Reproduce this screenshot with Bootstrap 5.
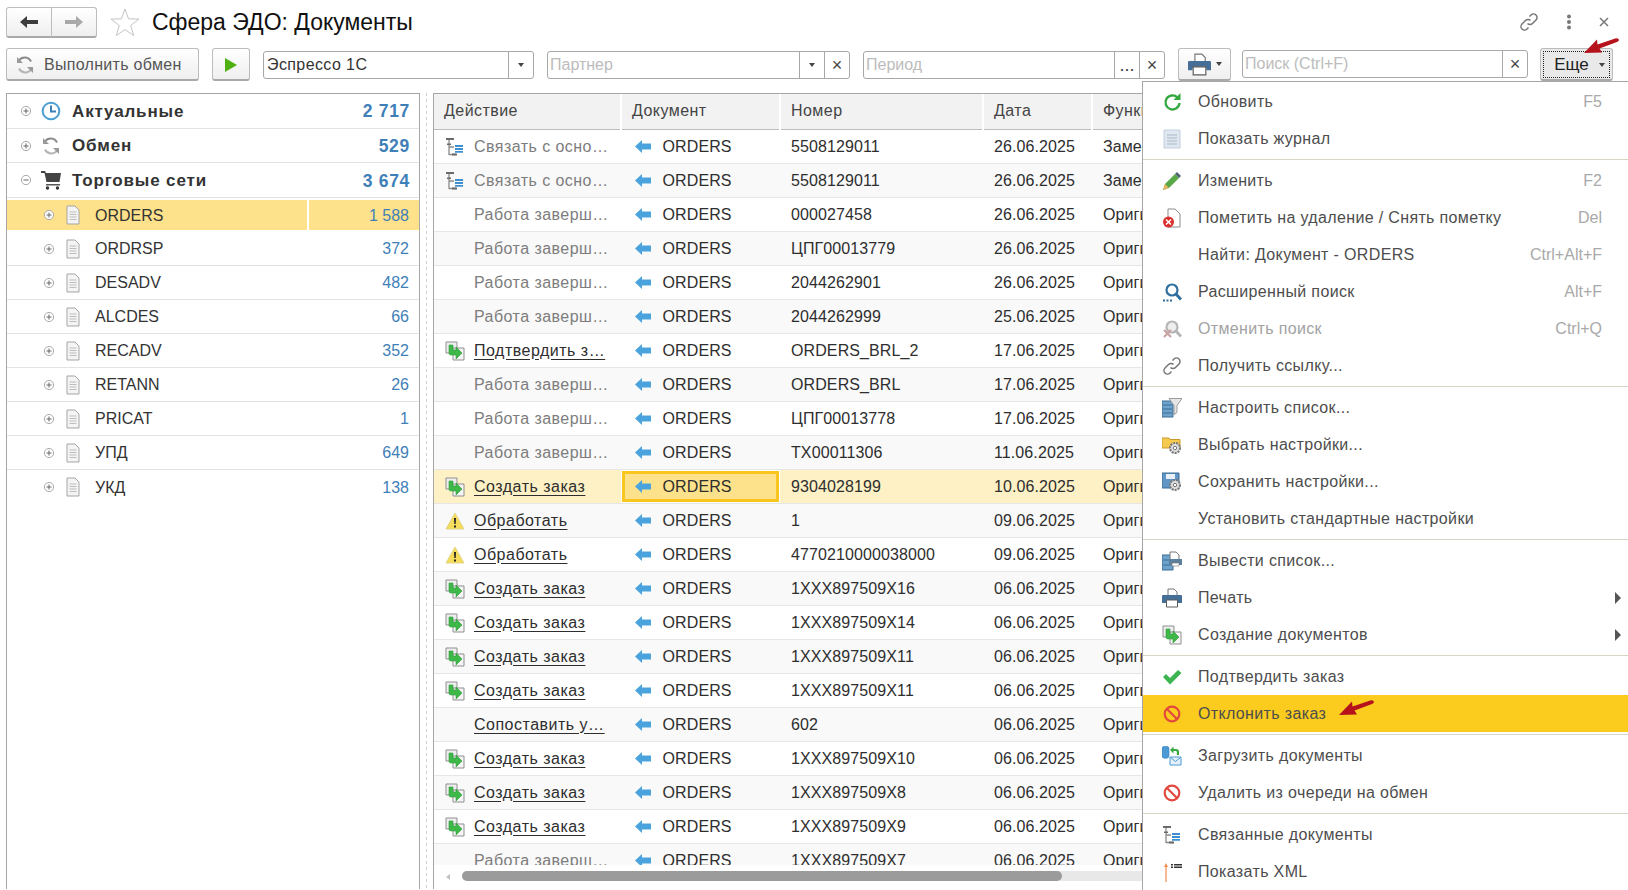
<!DOCTYPE html>
<html lang="ru">

<head>
    <meta charset="UTF-8">
    <title>Сфера ЭДО: Документы</title>
    <link href="https://cdn.jsdelivr.net/npm/bootstrap@5.3.0/dist/css/bootstrap.min.css" rel="stylesheet">
    <style>
        html, body {
            height: 890px;
            overflow: hidden;
        }

        body {
            background: #fff;
            font-family: "Liberation Sans", Arial, sans-serif;
            font-size: 16px;
            color: #2e2e2e;
        }

        .page-top {
            position: relative;
            padding: 7px 0 0 6px;
        }

        .title-row {
            height: 30px;
        }

        .page-title {
            font-size: 23px;
            font-weight: 400;
            color: #111;
            margin: 0 0 0 12px;
            line-height: 30px;
        }

        .star-icon {
            margin-left: 13px;
        }

        .top-icons {
            width: 91px;
            margin-right: 18px;
        }

        .nav-btn, .tool-btn {
            --bs-btn-padding-y: 0;
            --bs-btn-padding-x: 0;
            --bs-btn-font-size: 16px;
            --bs-btn-border-radius: 3px;
            background: linear-gradient(#fff, #efefef);
            border: 1px solid #bdbdbd;
            border-bottom: 2px solid #a9a9a9;
            color: #555;
        }

        .nav-btn {
            width: 46px;
            height: 31px;
        }

        .tools-row {
            height: 33px;
            margin-top: 11px;
            gap: 13px;
        }

        .tool-btn {
            height: 33px;
        }

        .exchange-btn {
            width: 193px;
            gap: 9px;
            padding-left: 8px;
            padding-top: 1px;
            letter-spacing: .3px;
            justify-content: flex-start;
        }

        .run-btn {
            width: 38px;
        }

        .print-btn {
            width: 53px;
            gap: 5px;
        }

        .more-btn {
            width: 73px;
            margin-left: -1px;
            padding-left: 6px;
            padding-top: 1px;
            background: #e9e9e9;
            color: #222;
            font-size: 17px;
            gap: 10px;
            outline: 1px dotted #222;
            outline-offset: -4px;
        }

        .caret-down {
            width: 0;
            height: 0;
            border: 3px solid transparent;
            border-top: 4px solid #444;
            border-bottom: 0;
        }

        .field {
            height: 28px;
            flex-wrap: nowrap;
        }

        .field .form-control {
            font-size: 16px;
            padding: 0 2px;
            border: 1px solid #a8a8a8;
            border-radius: 3px 0 0 3px;
            color: #333;
            box-shadow: none;
        }

        .field .form-control::placeholder {
            color: #bcbcbc;
        }

        .field .btn {
            width: 26px;
            padding: 0;
            font-size: 18px;
            line-height: 24px;
            border: 1px solid #a8a8a8;
            border-radius: 0;
            color: #444;
            background: #fff;
        }

        .field .btn:last-child {
            border-radius: 0 3px 3px 0;
        }

        .combo-field {
            width: 271px;
        }

        .combo-field .form-control {
            padding-left: 3px;
            letter-spacing: .4px;
        }

        .partner-field {
            width: 303px;
        }

        .period-field {
            width: 302px;
        }

        .search-field {
            width: 286px;
            margin-left: -2px;
            margin-top: -1px;
        }

        .work-area {
            height: 796px;
            margin-top: 12px;
            padding-left: 6px;
        }

        .tree-box {
            width: 414px;
            flex: none;
            border: 1px solid #a6a6a6;
            border-bottom: 0;
        }

        .tree-row {
            height: 34px;
            padding: 0;
            border-radius: 0 !important;
            border-color: #e3e3e3;
            color: #333;
            display: flex;
            align-items: center;
        }

        .tree-row.tree-top {
            height: 34.7px;
            font-weight: 700;
            font-size: 17px;
            letter-spacing: .85px;
        }

        .tree-row.tree-top .tree-count {
            letter-spacing: .7px;
            font-size: 17.5px;
            padding-right: 9px;
        }

        .tree-row.tree-sel {
            background: #fde28b;
            background-clip: padding-box;
            border-top: 2px solid #fff;
            border-bottom: 2px solid #fff;
        }

        .tree-row.tree-sel .tree-count {
            height: 100%;
            line-height: 30px;
            border-left: 2px solid #fff;
        }

        .tree-name {
            flex: 1;
            padding-top: 1px;
        }

        .tree-count {
            width: 112px;
            padding-right: 10px;
            padding-top: 1px;
            text-align: right;
            color: #3f7fb8;
        }

        .tree-top svg.tree-toggle {
            margin: 0 9px 0 13px;
        }

        .tree-top svg.tree-icon {
            margin-right: 11px;
        }

        .tree-child svg.tree-toggle {
            margin: 0 8px 0 36px;
        }

        .tree-child svg.tree-icon {
            margin-right: 12px;
        }

        .split-line {
            width: 13px;
            flex: none;
            background: linear-gradient(#d0d0d0 50%, transparent 50%) 6px 0 / 1px 6px repeat-y;
        }

        .docs-box {
            flex: 1;
            min-width: 0;
            position: relative;
            border: 1px solid #a6a6a6;
            border-bottom: 0;
            overflow: hidden;
        }

        .docs-scroll {
            height: 771px;
            overflow: hidden;
        }

        .docs-table {
            table-layout: fixed;
            width: 900px;
            margin: 0;
            color: #2e2e2e;
            font-size: 16px;
        }

        .docs-table th, .docs-table td {
            height: 34px;
            padding: 1px 0 0 11px;
            vertical-align: middle;
            white-space: nowrap;
            overflow: hidden;
            font-weight: 400;
            letter-spacing: .1px;
            border-bottom: 1px solid #e6e6e6;
            box-shadow: none;
            background: none;
            color: inherit;
        }

        .docs-table th {
            height: 35px;
            padding: 0 0 0 10px;
            letter-spacing: .45px;
            background: #f2f2f2;
            color: #444;
            border-bottom: 1px solid #bdbdbd;
            border-right: 2px solid #fff;
        }

        .docs-table tbody tr:nth-child(even) td {
            background: #f9f9f9;
        }

        .docs-table tbody tr.row-sel td {
            background: #fdf1c5;
        }

        .docs-table tbody tr.row-sel td.cell-sel {
            background: #fde28b;
            box-shadow: inset 0 0 0 1px #fff, inset 0 0 0 4px #f8c61e;
        }

        .action-cell {
            display: flex;
            align-items: center;
            height: 32px;
        }

        .action-icon {
            width: 22px;
            margin-left: -1px;
            margin-right: 8px;
            flex: none;
            display: flex;
            justify-content: center;
        }

        .action-done {
            color: #7d7d7d;
            letter-spacing: .45px;
        }

        .action-link {
            color: #2e2e2e;
            letter-spacing: .5px;
            text-decoration: underline;
            text-underline-offset: 3px;
        }

        .doc-arrow {
            margin: 0 7px 0 3px;
            vertical-align: -1px;
        }

        .h-scroll {
            height: 10px;
            margin: 6px 0 0 28px;
            background: #e8e8e8;
            border-radius: 5px;
            position: relative;
        }

        .h-scroll::before {
            content: "";
            display: block;
            width: 600px;
            height: 10px;
            background: #9b9b9b;
            border-radius: 5px;
        }

        .scroll-left {
            position: absolute;
            left: 12px;
            top: 780px;
            border: 3px solid transparent;
            border-right: 4px solid #c2c2c2;
            border-left: 0;
        }

        .more-menu {
            --bs-dropdown-padding-y: 1px;
            --bs-dropdown-padding-x: 0;
            --bs-dropdown-border-radius: 0;
            --bs-dropdown-border-color: #a6a6a6;
            --bs-dropdown-font-size: 16px;
            --bs-dropdown-link-color: #4d4d4d;
            position: absolute;
            display: block;
            left: 1142px;
            top: 81px;
            width: 490px;
            height: 815px;
            overflow: hidden;
            border-width: 1px 0 0 1px;
        }

        .more-menu .dropdown-item {
            height: 37px;
            padding: 0 30px 0 0;
            letter-spacing: .35px;
            display: flex;
            align-items: center;
        }

        .more-menu .dropdown-item.disabled {
            color: #a2a2a2;
        }

        .more-menu .dropdown-item.item-hot {
            background: #fbcb1e;
        }

        .more-menu .dropdown-divider {
            margin: 2px 0;
            border-color: #d9d5c5;
            opacity: 1;
        }

        .menu-icon {
            width: 55px;
            flex: none;
            padding-left: 19px;
            display: flex;
        }

        .menu-key {
            margin-left: auto;
            letter-spacing: 0;
            color: #a9a9a9;
        }

        .caret-right {
            margin-left: auto;
            margin-right: -19px;
            width: 0;
            height: 0;
            border: 6px solid transparent;
            border-left: 6px solid #555;
            border-right: 0;
        }

        .red-arrow {
            position: absolute;
            z-index: 1001;
        }

        .arrow-more {
            left: 1584px;
            top: 38px;
        }

        .arrow-reject {
            left: 1339px;
            top: 700px;
        }
    </style>
</head>

<body>
    <svg width="0" height="0" class="position-absolute">
        <symbol id="i-sync" viewBox="0 0 20 20">
            <path d="M16 6.500A7 7 0 0 0 4 5.500" fill="none" stroke="#8a8a8a" stroke-width="2" />
            <path d="M4 13.500a7 7 0 0 0 12 1" fill="none" stroke="#b5b5b5" stroke-width="2" />
            <path d="M2 2v6h6zM18 18v-6h-6z" fill="#9a9a9a" />
        </symbol>
        <symbol id="i-clock" viewBox="0 0 20 20">
            <circle cx="10" cy="10" r="8.300" fill="#fff" stroke="#4b9fd5" stroke-width="2" />
            <path d="M10 4.500V10.500H15" fill="none" stroke="#3a7fb5" stroke-width="2" />
        </symbol>
        <symbol id="i-cart" viewBox="0 0 20 20">
            <path d="M0 1h4l1 2h15l-1.500 9H5.500L3.500 3H0z" fill="#444" />
            <path d="M5 14h14v1.500H5z" fill="#555" />
            <circle cx="6.500" cy="18" r="1.700" fill="#333" />
            <circle cx="16.500" cy="18" r="1.700" fill="#333" />
        </symbol>
        <symbol id="i-page" viewBox="0 0 20 20">
            <path d="M4 1h8l4 4v14H4z" fill="#f4f4f4" stroke="#a5a5a5" />
            <path d="M6.500 7h7M6.500 9.500h7M6.500 12h7M6.500 14.500h7" stroke="#bdbdbd" />
        </symbol>
        <symbol id="i-plus" viewBox="0 0 12 12">
            <circle cx="6" cy="6" r="4.600" fill="#fff" stroke="#aaa" />
            <path d="M3.500 6h5M6 3.500v5" stroke="#666" />
        </symbol>
        <symbol id="i-minus" viewBox="0 0 12 12">
            <circle cx="6" cy="6" r="4.600" fill="#fff" stroke="#aaa" />
            <path d="M3.500 6h5" stroke="#666" />
        </symbol>
        <symbol id="i-links" viewBox="0 0 20 20">
            <path d="M1 1h8v2H1z" fill="#6a6a6a" />
            <path d="M4 3v15M4 10h5M4 17.500h7" fill="none" stroke="#8a8a8a" stroke-width="1.300" />
            <path d="M2 6.500h4v1.500H2zM7 16.500h5v2H7z" fill="#6a6a6a" />
            <path d="M10 8h8v2h-8zM10 11h8v2h-8zM10 14h8v1.800h-8z" fill="#3f8fd0" />
        </symbol>
        <symbol id="i-create" viewBox="0 0 20 20">
            <path d="M1 1h11v11H1z" fill="#eee" stroke="#8f8f8f" />
            <path d="M8 7h11v12H8z" fill="#f5f5f5" stroke="#8f8f8f" />
            <path d="M4 4h4v5h3V6l6 6-6 6v-4H6q-2 0-2-2z" fill="#3fb84a" stroke="#2c9a38" stroke-width=".6" />
        </symbol>
        <symbol id="i-warn" viewBox="0 0 20 20">
            <path d="M10 2 19 18H1z" fill="#f5dc5a" stroke="#e3d486" stroke-linejoin="round" />
            <path d="M9 7h2l-.3 6H9.300zM9 14.500h2v2H9z" fill="#222" />
        </symbol>
        <symbol id="i-back" viewBox="0 0 16 13">
            <path d="M0 6.500 7 0v3.500h9v6H7V13z" fill="#4aa3dc" />
        </symbol>
        <symbol id="i-refresh" viewBox="0 0 20 20">
            <path d="M15.500 5.500a7 7 0 1 0 2 5.500" fill="none" stroke="#35a83f" stroke-width="2.400" />
            <path d="M18.500 1v7h-7z" fill="#35a83f" />
        </symbol>
        <symbol id="i-journal" viewBox="0 0 20 20">
            <path d="M2 1h16v18H2z" fill="#dfe8f1" stroke="#c2d0de" />
            <path d="M5 6h10M5 9h10M5 12h10M5 15h10" stroke="#aab8c6" />
        </symbol>
        <symbol id="i-pencil" viewBox="0 0 20 20">
            <path d="M1 19l2-6L13 3l4 4L7 17z" fill="#58a845" />
            <path d="M13 3l2-2 4 4-2 2z" fill="#4f6272" />
            <path d="M1 19l2-6 4 4z" fill="#eab35f" />
        </symbol>
        <symbol id="i-del" viewBox="0 0 20 20">
            <path d="M6 1h7l5 5v13H6z" fill="#fff" stroke="#8b8b8b" />
            <circle cx="6.500" cy="14" r="5.500" fill="#d8312f" />
            <path d="M4 11.500l5 5M9 11.500l-5 5" stroke="#fff" stroke-width="1.500" />
        </symbol>
        <symbol id="i-search" viewBox="0 0 20 20">
            <circle cx="10" cy="8" r="5.500" fill="#fff" stroke="#2f6f9f" stroke-width="2.200" />
            <path d="M14 12l5 5.500" stroke="#2f6f9f" stroke-width="2.800" />
            <path d="M1 17.500h2v2H1zM4.500 17.500h2v2h-2zM8 17.500h2v2H8z" fill="#2f6f9f" />
        </symbol>
        <symbol id="i-unsearch" viewBox="0 0 20 20">
            <circle cx="10" cy="8" r="5.500" fill="#eee" stroke="#b5b5b5" stroke-width="2.200" />
            <path d="M14 12l5 5.500" stroke="#b5b5b5" stroke-width="2.800" />
            <path d="M2 11l7 7M9 11l-7 7" stroke="#c9a3a3" stroke-width="2.200" />
        </symbol>
        <symbol id="i-link" viewBox="0 0 20 20">
            <path d="M8.500 11.500a3.500 3.500 0 0 0 5 0l3.500-3.500a3.500 3.500 0 0 0-5-5l-1.500 1.500" fill="none" stroke="#777" stroke-width="1.500" />
            <path d="M11.500 8.500a3.500 3.500 0 0 0-5 0L3 12a3.500 3.500 0 0 0 5 5l1.500-1.500" fill="none" stroke="#777" stroke-width="1.500" />
        </symbol>
        <symbol id="i-filter" viewBox="0 0 20 20">
            <path d="M0 3h11v16H0z" fill="#6ea3cc" stroke="#3c6d94" />
            <path d="M1 7h9M1 11h9M1 15h9" stroke="#3c6d94" />
            <path d="M7 .5h13l-5 7v7l-3 2v-9z" fill="#e5e5e5" stroke="#888" stroke-width=".8" />
        </symbol>
        <symbol id="i-gear-folder" viewBox="0 0 20 20">
            <path d="M0 3h7l1 1.500h10V13H0z" fill="#f6c94f" stroke="#c99a2a" />
            <circle cx="13" cy="13" r="5" fill="#ddd" stroke="#777" stroke-width="2" stroke-dasharray="2 1" />
            <circle cx="13" cy="13" r="1.700" fill="#fff" stroke="#777" />
        </symbol>
        <symbol id="i-gear-save" viewBox="0 0 20 20">
            <path d="M0 1h17v15H0z" fill="#5f96c6" stroke="#3c6d94" />
            <path d="M4 2h9v5H4z" fill="#e9f0f6" />
            <circle cx="13" cy="13" r="5" fill="#ddd" stroke="#777" stroke-width="2" stroke-dasharray="2 1" />
            <circle cx="13" cy="13" r="1.700" fill="#fff" stroke="#777" />
        </symbol>
        <symbol id="i-export" viewBox="0 0 20 20">
            <path d="M0 4h11v15H0z" fill="#6ea3cc" stroke="#3c6d94" />
            <path d="M1 9h9M1 14h9" stroke="#3c6d94" />
            <path d="M8 1h6l3 3v5H8z" fill="#fff" stroke="#777" />
            <path d="M7 8h13v6H7z" fill="#5c7f9e" />
            <path d="M10 12h7v3h-7z" fill="#fff" stroke="#777" stroke-width=".6" />
        </symbol>
        <symbol id="i-print" viewBox="0 0 20 20">
            <path d="M6 1h6l3 3v4H6z" fill="#fff" stroke="#777" />
            <path d="M1 7h18q1 0 1 1v7h-4v-2H4v2H0V8q0-1 1-1z" fill="#456f96" />
            <path d="M4.500 12h11v7h-11z" fill="#fff" stroke="#5c5c5c" />
        </symbol>
        <symbol id="i-stop" viewBox="0 0 20 20">
            <circle cx="10" cy="10" r="7.300" fill="none" stroke="#e2483d" stroke-width="2.200" />
            <path d="M5 5l10 10" stroke="#e2483d" stroke-width="2.200" />
        </symbol>
        <symbol id="i-check" viewBox="0 0 20 20">
            <path d="M1 10l3-3 4 4 8-8 3.500 3L8 17.500z" fill="#3cb44f" />
        </symbol>
        <symbol id="i-load" viewBox="0 0 20 20">
            <path d="M0 2.500a3 2 0 0 1 7 0V10a3 2 0 0 1-7 0z" fill="#4a9ad6" stroke="#3a7fb5" stroke-width=".6" />
            <path d="M8 4l3.500-3.500V3H14q3 0 3 3v3h-2.200V6q0-1-1-1h-2.300v2.500z" fill="#38a83f" />
            <path d="M8 11h11v8H8z" fill="#e5f1fa" stroke="#4a9ad6" />
            <path d="M8.500 11.500l5 4 5-4" fill="none" stroke="#4a9ad6" />
        </symbol>
        <symbol id="i-xml" viewBox="0 0 20 20">
            <path d="M4 20V3" stroke="#f08a4b" stroke-width="1.200" />
            <path d="M2 5l2-4 2 4z" fill="#f08a4b" />
            <path d="M9 2h2v1.500H9zM9 4.500h2V6H9zM12 2h8v1.500h-8zM12 4.500h8V6h-8z" fill="#333" />
        </symbol>
        <symbol id="i-red-arrow" viewBox="0 0 36 16">
            <path d="M0 15 13 1.500 13.500 6.500 32 .3Q35 .2 35 2 35 3.200 33 4L15.500 10.500 18 14.500z" fill="#b5121b" />
        </symbol>
    </svg>

    <div class="page-top">
        <div class="d-flex align-items-center title-row">
            <div class="btn-group">
                <button class="btn nav-btn" type="button">
                    <svg width="20" height="14" viewBox="0 0 20 14"><path d="M1 7 8 1v4h11v4H8v4z" fill="#3d3d3d" /></svg>
                </button>
                <button class="btn nav-btn" type="button">
                    <svg width="20" height="14" viewBox="0 0 20 14"><path d="M19 7 12 1v4H1v4h11v4z" fill="#a9a9a9" /></svg>
                </button>
            </div>
            <svg class="star-icon" width="30" height="30" viewBox="0 0 30 30">
                <path d="M15 2l3.500 9.800 10.500.3-8.300 6.400 3 10-8.700-5.900-8.700 5.900 3-10L1 12.100l10.500-.3z" fill="#fff" stroke="#c4c4c4" />
            </svg>
            <h1 class="page-title">Сфера ЭДО: Документы</h1>
            <div class="ms-auto d-flex align-items-center justify-content-between top-icons">
                <svg width="20" height="20"><use href="#i-link" /></svg>
                <svg width="6" height="16" viewBox="0 0 6 16">
                    <circle cx="3" cy="2.500" r="2" fill="#777" />
                    <circle cx="3" cy="8" r="2" fill="#777" />
                    <circle cx="3" cy="13.500" r="2" fill="#777" />
                </svg>
                <svg width="12" height="12" viewBox="0 0 12 12"><path d="M2 2l8 8M10 2l-8 8" stroke="#777" stroke-width="1.500" /></svg>
            </div>
        </div>

        <div class="d-flex align-items-center tools-row">
            <button class="btn tool-btn exchange-btn d-flex align-items-center" type="button">
                <svg width="20" height="20"><use href="#i-sync" /></svg>Выполнить обмен
            </button>
            <button class="btn tool-btn run-btn" type="button">
                <svg width="14" height="16" viewBox="0 0 14 16"><path d="M1 1l12 7-12 7z" fill="#4fb012" /></svg>
            </button>
            <div class="input-group field combo-field">
                <input class="form-control" type="text" value="Эспрессо 1С">
                <button class="btn d-flex align-items-center justify-content-center" type="button"><span class="caret-down"></span></button>
            </div>
            <div class="input-group field partner-field">
                <input class="form-control" type="text" placeholder="Партнер">
                <button class="btn d-flex align-items-center justify-content-center" type="button"><span class="caret-down"></span></button>
                <button class="btn" type="button">×</button>
            </div>
            <div class="input-group field period-field">
                <input class="form-control" type="text" placeholder="Период">
                <button class="btn" type="button">...</button>
                <button class="btn" type="button">×</button>
            </div>
            <button class="btn tool-btn print-btn d-flex align-items-center justify-content-center" type="button">
                <svg width="23" height="23"><use href="#i-print" /></svg><span class="caret-down"></span>
            </button>
            <div class="input-group field search-field">
                <input class="form-control" type="text" placeholder="Поиск (Ctrl+F)">
                <button class="btn" type="button">×</button>
            </div>
            <button class="btn tool-btn more-btn d-flex align-items-center justify-content-center" type="button">
                Еще<span class="caret-down"></span>
            </button>
        </div>
    </div>

    <div class="d-flex work-area">
        <div class="tree-box">
            <ul class="list-group list-group-flush" id="tree"></ul>
        </div>
        <div class="split-line"></div>
        <div class="docs-box">
            <div class="docs-scroll">
                <table class="table docs-table">
                    <colgroup>
                        <col style="width:187px">
                        <col style="width:159px">
                        <col style="width:203px">
                        <col style="width:109px">
                        <col>
                    </colgroup>
                    <thead>
                        <tr>
                            <th>Действие</th>
                            <th>Документ</th>
                            <th>Номер</th>
                            <th>Дата</th>
                            <th>Функция</th>
                        </tr>
                    </thead>
                    <tbody id="docs"></tbody>
                </table>
            </div>
            <span class="scroll-left"></span>
            <div class="h-scroll"></div>
        </div>
    </div>

    <div class="dropdown-menu more-menu" id="menu"></div>

    <svg class="red-arrow arrow-more" width="36" height="16"><use href="#i-red-arrow" /></svg>
    <svg class="red-arrow arrow-reject" width="36" height="16"><use href="#i-red-arrow" /></svg>

    <script>
        function icon(id, size, cls) {
            return `<svg width="${size}" height="${size}" class="${cls || ''}"><use href="#${id}" /></svg>`;
        }

        const treeTop = [
            ['i-plus', 'i-clock', 'Актуальные', '2 717'],
            ['i-plus', 'i-sync', 'Обмен', '529'],
            ['i-minus', 'i-cart', 'Торговые сети', '3 674']
        ];
        const treeChild = [
            ['ORDERS', '1 588'], ['ORDRSP', '372'], ['DESADV', '482'], ['ALCDES', '66'], ['RECADV', '352'],
            ['RETANN', '26'], ['PRICAT', '1'], ['УПД', '649'], ['УКД', '138']
        ];

        document.getElementById('tree').innerHTML =
            treeTop.map(r => `<li class="list-group-item tree-row tree-top">${icon(r[0], 12, 'tree-toggle')}${icon(r[1], 20, 'tree-icon')}<span class="tree-name">${r[2]}</span><span class="tree-count">${r[3]}</span></li>`).join('') +
            treeChild.map((r, i) => `<li class="list-group-item tree-row tree-child ${i === 0 ? 'tree-sel' : ''}">${icon('i-plus', 12, 'tree-toggle')}${icon('i-page', 20, 'tree-icon')}<span class="tree-name">${r[0]}</span><span class="tree-count">${r[1]}</span></li>`).join('');

        const docs = [
            ['i-links', 'Связать с осно…', 0, '5508129011', '26.06.2025', 'Замена'],
            ['i-links', 'Связать с осно…', 0, '5508129011', '26.06.2025', 'Замена'],
            ['', 'Работа заверш…', 0, '000027458', '26.06.2025', 'Оригинал'],
            ['', 'Работа заверш…', 0, 'ЦПГ00013779', '26.06.2025', 'Оригинал'],
            ['', 'Работа заверш…', 0, '2044262901', '26.06.2025', 'Оригинал'],
            ['', 'Работа заверш…', 0, '2044262999', '25.06.2025', 'Оригинал'],
            ['i-create', 'Подтвердить з…', 1, 'ORDERS_BRL_2', '17.06.2025', 'Оригинал'],
            ['', 'Работа заверш…', 0, 'ORDERS_BRL', '17.06.2025', 'Оригинал'],
            ['', 'Работа заверш…', 0, 'ЦПГ00013778', '17.06.2025', 'Оригинал'],
            ['', 'Работа заверш…', 0, 'ТХ00011306', '11.06.2025', 'Оригинал'],
            ['i-create', 'Создать заказ', 1, '9304028199', '10.06.2025', 'Оригинал'],
            ['i-warn', 'Обработать', 1, '1', '09.06.2025', 'Оригинал'],
            ['i-warn', 'Обработать', 1, '4770210000038000', '09.06.2025', 'Оригинал'],
            ['i-create', 'Создать заказ', 1, '1ХХХ897509Х16', '06.06.2025', 'Оригинал'],
            ['i-create', 'Создать заказ', 1, '1ХХХ897509Х14', '06.06.2025', 'Оригинал'],
            ['i-create', 'Создать заказ', 1, '1ХХХ897509Х11', '06.06.2025', 'Оригинал'],
            ['i-create', 'Создать заказ', 1, '1ХХХ897509Х11', '06.06.2025', 'Оригинал'],
            ['', 'Сопоставить у…', 1, '602', '06.06.2025', 'Оригинал'],
            ['i-create', 'Создать заказ', 1, '1ХХХ897509Х10', '06.06.2025', 'Оригинал'],
            ['i-create', 'Создать заказ', 1, '1ХХХ897509Х8', '06.06.2025', 'Оригинал'],
            ['i-create', 'Создать заказ', 1, '1ХХХ897509Х9', '06.06.2025', 'Оригинал'],
            ['', 'Работа заверш…', 0, '1ХХХ897509Х7', '06.06.2025', 'Оригинал']
        ];

        document.getElementById('docs').innerHTML = docs.map((d, i) => `
            <tr class="${i === 10 ? 'row-sel' : ''}">
                <td><div class="action-cell"><span class="action-icon">${d[0] ? icon(d[0], 20) : ''}</span><span class="${d[2] ? 'action-link' : 'action-done'}">${d[1]}</span></div></td>
                <td class="${i === 10 ? 'cell-sel' : ''}"><svg class="doc-arrow" width="16" height="13"><use href="#i-back" /></svg> ORDERS</td>
                <td>${d[3]}</td>
                <td>${d[4]}</td>
                <td>${d[5]}</td>
            </tr>`).join('');

        const menu = [
            ['i-refresh', 'Обновить', 'F5'],
            ['i-journal', 'Показать журнал'],
            '-',
            ['i-pencil', 'Изменить', 'F2'],
            ['i-del', 'Пометить на удаление / Снять пометку', 'Del'],
            ['', 'Найти: Документ - ORDERS', 'Ctrl+Alt+F'],
            ['i-search', 'Расширенный поиск', 'Alt+F'],
            ['i-unsearch', 'Отменить поиск', 'Ctrl+Q', 'disabled'],
            ['i-link', 'Получить ссылку...'],
            '-',
            ['i-filter', 'Настроить список...'],
            ['i-gear-folder', 'Выбрать настройки...'],
            ['i-gear-save', 'Сохранить настройки...'],
            ['', 'Установить стандартные настройки'],
            '-',
            ['i-export', 'Вывести список...'],
            ['i-print', 'Печать', '>'],
            ['i-create', 'Создание документов', '>'],
            '-',
            ['i-check', 'Подтвердить заказ'],
            ['i-stop', 'Отклонить заказ', '', 'item-hot'],
            '-',
            ['i-load', 'Загрузить документы'],
            ['i-stop', 'Удалить из очереди на обмен'],
            '-',
            ['i-links', 'Связанные документы'],
            ['i-xml', 'Показать XML']
        ];

        document.getElementById('menu').innerHTML = menu.map(m => {
            if (m === '-') return '<hr class="dropdown-divider">';
            const tail = m[2] === '>' ? '<span class="caret-right"></span>' : (m[2] ? `<span class="menu-key">${m[2]}</span>` : '');
            return `<a class="dropdown-item ${m[3] || ''}" href="#"><span class="menu-icon">${m[0] ? icon(m[0], 20) : ''}</span>${m[1]}${tail}</a>`;
        }).join('');
    </script>
    <script src="https://cdn.jsdelivr.net/npm/bootstrap@5.3.0/dist/js/bootstrap.bundle.min.js"></script>
</body>

</html>
